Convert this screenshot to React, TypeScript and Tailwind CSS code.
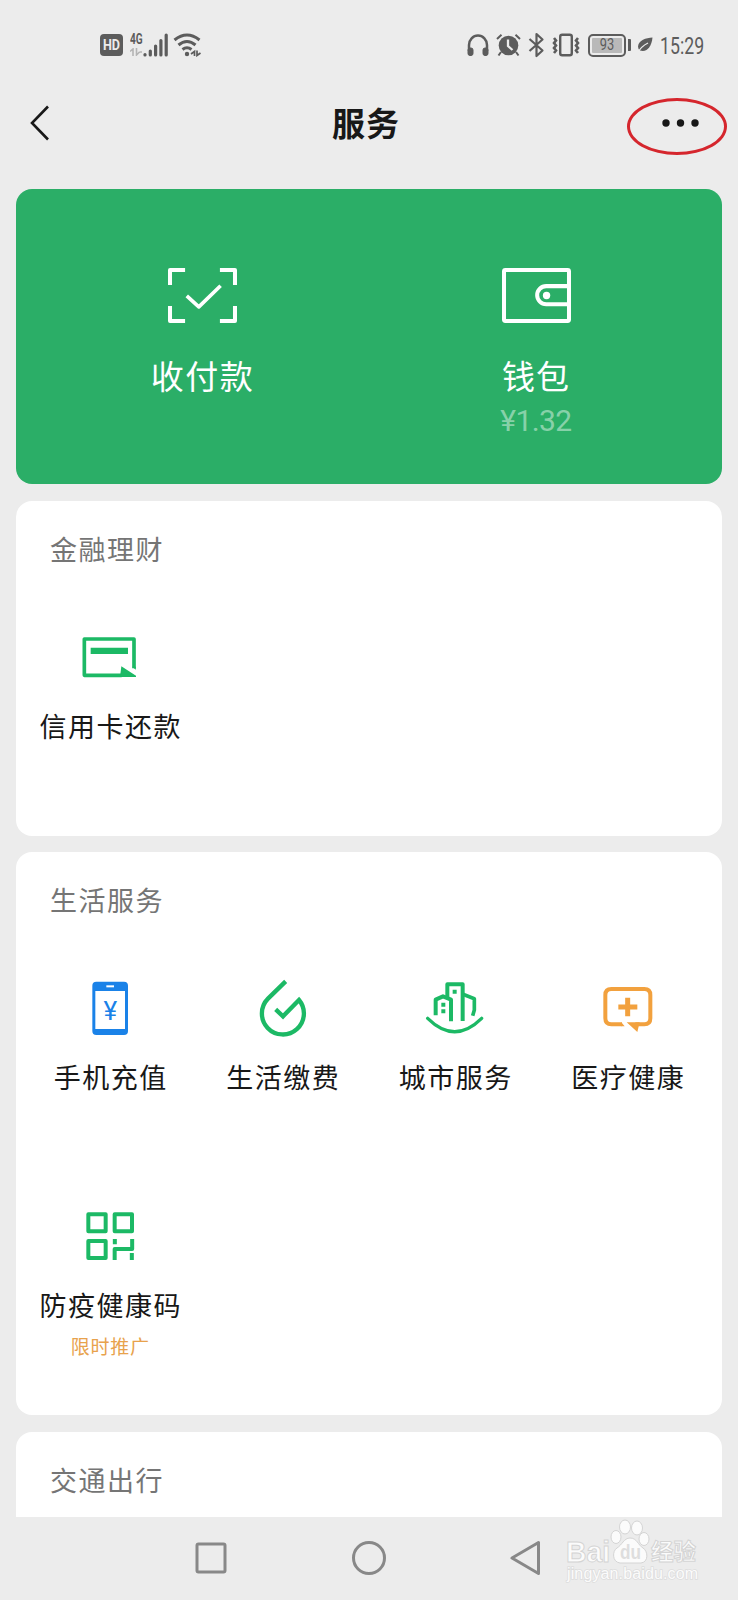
import React from 'react';

interface ServiceItem {
    label: string;
    icon: React.ReactNode;
    note?: string;
}

interface ServiceCardProps {
    title: string;
    items: ServiceItem[];
}

const GREEN = '#1cb965';
const ORANGE = '#f2a13e';

// Service icons, all drawn on the same 180 unit grid
const CardIcon = () => (
    <svg className="size-[60px]" viewBox="0 0 180 180" fill="none">
        <path d="M125 145H13V36H162V124" stroke={GREEN} strokeWidth="11" strokeLinejoin="round" />
        <path d="M32 62H144V81H32Z" fill={GREEN} />
        <path d="M124 118L168 146V150H120Z" fill={GREEN} />
        <path d="M156.500 119L167.500 128V119Z" fill={GREEN} />
    </svg>
);

const PhoneIcon = () => (
    <svg className="size-[60px]" viewBox="0 0 180 180" fill="none">
        <rect x="37" y="11" width="107" height="160" rx="12" fill="#1a82e8" />
        <rect x="46" y="39" width="89" height="114" fill="#fff" />
        <path d="M79 25H102" stroke="#fff" strokeWidth="6" />
        <text x="91" y="126" textAnchor="middle" fontSize="78" fill="#1a82e8" className="font-['Roboto',sans-serif]">¥</text>
    </svg>
);

const DropIcon = () => (
    <svg className="size-[60px]" viewBox="0 0 180 180" fill="none">
        <path d="M98 10L45 62A63 63 0 1 0 138 66L90 115L68 94" stroke={GREEN} strokeWidth="13" />
    </svg>
);

const CityIcon = () => (
    <svg className="size-[60px]" viewBox="0 0 180 180" fill="none" stroke={GREEN}>
        <path d="M32 112V65L54 55L78 65V130" strokeWidth="12" strokeLinejoin="round" />
        <path d="M67 57V19H113V129" strokeWidth="12" strokeLinejoin="round" />
        <path d="M114 49L148 62V96L143 113" strokeWidth="11" strokeLinejoin="round" />
        <path d="M83 41H95M49 80H61M49 100H61" strokeWidth="12" />
        <path d="M8 121Q89 201 170 121" strokeWidth="10" strokeLinecap="round" />
    </svg>
);

const MedicalIcon = () => (
    <svg className="size-[60px]" viewBox="0 0 180 180" fill="none">
        <path
            d="M72 139H40Q22 139 22 121V51Q22 33 40 33H139Q157 33 157 51V121Q157 139 139 139H112"
            stroke={ORANGE}
            strokeWidth="12"
        />
        <path d="M70 133L80 145H70ZM86 133H125L118 162Z" fill={ORANGE} />
        <path d="M61 87H118M89 59V115" stroke={ORANGE} strokeWidth="15" />
    </svg>
);

const CodeIcon = () => (
    <svg className="size-[60px]" viewBox="0 0 180 180" fill="none" stroke={GREEN} strokeWidth="12" strokeLinejoin="round">
        <rect x="25" y="25" width="52" height="51" />
        <rect x="104" y="25" width="52" height="51" />
        <rect x="25" y="105" width="52" height="51" />
        <path d="M156.500 99V129H104V162M104.500 99V115M155.500 141V162" />
    </svg>
);

const FINANCE: ServiceItem[] = [{ label: '信用卡还款', icon: <CardIcon /> }];

const LIFE: ServiceItem[] = [
    { label: '手机充值', icon: <PhoneIcon /> },
    { label: '生活缴费', icon: <DropIcon /> },
    { label: '城市服务', icon: <CityIcon /> },
    { label: '医疗健康', icon: <MedicalIcon /> },
    { label: '防疫健康码', icon: <CodeIcon />, note: '限时推广' }
];

const StatusBar = () => (
    <div className="flex h-[90px] shrink-0 items-center justify-between pr-[35px] pl-[100px] text-[#5c5c5c]">
        <div className="flex items-center">
            <span className="flex h-[22px] w-[23px] items-center justify-center rounded-[4px] bg-current">
                <span className="scale-x-90 text-[14px] leading-none font-bold text-[#ececec]">HD</span>
            </span>
            <span className="ml-[7px] flex h-[24px] w-[13px] flex-col">
                <span className="h-[13px] w-[16px] origin-left scale-x-[0.72] text-[14px] leading-[12px] font-bold">4G</span>
                <svg className="mt-[2px] h-[8px] w-[13px] text-[#b4b4b4]" viewBox="0 0 13 8" fill="none" stroke="currentColor" strokeWidth="1.600">
                    <path d="M0 3.500L3 1V8M6.500 0V7L9.500 4M9.500 4H12" />
                </svg>
            </span>
            <svg className="h-[24px] w-[25px]" viewBox="0 0 25 24" stroke="currentColor" strokeWidth="3.200" strokeLinecap="round">
                <path d="M2 21.500V22M7.300 18V22M12.600 13V22M17.900 7.500V22M23.200 2V22" />
            </svg>
            <svg className="ml-[5px] h-[24px] w-[29px]" viewBox="0 0 29 24" fill="none" stroke="currentColor" strokeWidth="3">
                <path d="M1.500 7Q14 -3 26.500 7M5.500 12Q14 5 22.500 12M9.500 16.500Q14 13 18.500 16.500" />
                <circle cx="14" cy="21" r="2.200" fill="currentColor" stroke="none" />
                <path d="M18 21L21.500 18.500V23M24 17.500V22.500L27.500 20" strokeWidth="1.700" />
            </svg>
        </div>
        <div className="flex items-center">
            <svg className="h-[24px] w-[22px]" viewBox="0 0 22 24" fill="none" stroke="currentColor">
                <path d="M2 18V12A9 9.500 0 0 1 20 12V18" strokeWidth="2.500" />
                <rect x="1" y="15" width="5" height="7.500" rx="2" fill="currentColor" />
                <rect x="16" y="15" width="5" height="7.500" rx="2" fill="currentColor" />
            </svg>
            <svg className="ml-[7px] h-[24px] w-[25px]" viewBox="0 0 25 24" fill="none" stroke="currentColor" strokeWidth="2">
                <circle cx="12.500" cy="12.500" r="9.800" fill="currentColor" stroke="none" />
                <path d="M1 6L5.500 1.800M19.500 1.800L24 6M5 19L2.500 22.500M20 19L22.500 22.500" />
                <path d="M12 6.500V13L16.500 17" stroke="#ececec" strokeWidth="2.300" />
            </svg>
            <svg className="ml-[7px] h-[26px] w-[17px]" viewBox="0 0 17 26" fill="none" stroke="currentColor" strokeWidth="2.200" strokeLinejoin="round">
                <path d="M1.500 7L14.500 18.500L8.500 24V2L14.500 7.500L1.500 19" />
            </svg>
            <svg className="ml-[7px] h-[24px] w-[28px]" viewBox="0 0 28 24" fill="none" stroke="currentColor" strokeWidth="2.400">
                <rect x="8.200" y="1.700" width="11.600" height="20.600" rx="2" />
                <path d="M2 5L4 7.500L2 10L4 12.500L2 15L4 17.500L2 20M26 5L24 7.500L26 10L24 12.500L26 15L24 17.500L26 20" strokeWidth="2.600" />
            </svg>
            <span className="ml-[8px] flex h-[23px] w-[38px] items-center rounded-[5px] border-2 border-current p-[2px]">
                <span className="flex h-full w-full items-center justify-center rounded-[1px] bg-[#b9b9b9]">
                    <span className="scale-x-[0.8] text-[16px] leading-none">93</span>
                </span>
            </span>
            <span className="ml-[2px] h-[12px] w-[3px] rounded-r-[1px] bg-current" />
            <svg className="ml-[6px] h-[16px] w-[16px]" viewBox="0 0 16 16" fill="none">
                <path d="M15.500 .5C9 1 1.500 3 1 9.500Q1 12 3 13.500C10 15.500 14.500 10 15.500 .5Z" fill="currentColor" />
                <path d="M1 15.500Q4 9.500 11 6" stroke="#ececec" strokeWidth="1.300" />
            </svg>
            <span className="ml-[7px] w-[43px] pt-[2px] text-[23px] leading-none">
                <span className="block origin-left scale-x-[0.77]">15:29</span>
            </span>
        </div>
    </div>
);

const TitleBar = () => (
    <header className="relative flex h-[67px] shrink-0 items-center justify-between pr-[39px] pb-[1px] pl-[30px] text-[#181818]">
        <svg className="h-[36px] w-[20px]" viewBox="0 0 20 36" fill="none" stroke="currentColor" strokeWidth="2.600">
            <path d="M18 1.500L2 18L18 34.500" />
        </svg>
        <h1 className="absolute inset-x-0 pt-[2px] pr-[6px] text-center text-[33px] leading-none font-bold tracking-[1px]">服务</h1>
        <svg className="h-[8px] w-[37px]" viewBox="0 0 37 8" fill="currentColor">
            <circle cx="4" cy="4" r="3.700" />
            <circle cx="18.500" cy="4" r="3.700" />
            <circle cx="33" cy="4" r="3.700" />
        </svg>
        <span className="absolute top-[8px] right-[11px] h-[57px] w-[100px] rounded-[50%] border-[3px] border-[#d5262d]" />
    </header>
);

const PayPanel = () => (
    <section className="mt-[32px] grid h-[295px] shrink-0 grid-cols-2 rounded-[16px] bg-[#2bae67] px-5 pt-[79px] text-white">
        <div className="flex flex-col items-center">
            <svg className="h-[55px] w-[69px]" viewBox="0 0 206 164" fill="none" stroke="currentColor" strokeWidth="12" strokeLinejoin="round">
                <path d="M6 51V6H51M155 6H200V51M200 113V158H155M51 158H6V113" />
                <path d="M56 83L92 116L157 53" strokeWidth="11" />
            </svg>
            <span className="mt-[33px] text-[33px] leading-[44px] tracking-[1.5px]">收付款</span>
        </div>
        <div className="flex flex-col items-center pl-[1px]">
            <svg className="h-[55px] w-[69px]" viewBox="0 0 206 164" fill="none" stroke="currentColor" strokeWidth="12">
                <rect x="6" y="6" width="194" height="152" rx="4" />
                <path d="M199 54H132A27 27 0 0 0 132 108H199" />
                <circle cx="133" cy="82" r="11" fill="currentColor" stroke="none" />
            </svg>
            <span className="mt-[33px] text-[33px] leading-[44px] tracking-[1px]">钱包</span>
            <span className="mt-[4px] text-[30px] leading-[34px] tracking-[-0.6px] text-white/45">¥1.32</span>
        </div>
    </section>
);

const ServiceCard: React.FC<ServiceCardProps> = ({ title, items }) => (
    <section className="shrink-0 rounded-[16px] bg-white px-2 pb-[7px]">
        <h2 className="flex h-[100px] items-center pt-[1px] pl-[26px] text-[27px] leading-none tracking-[1.5px] text-[#757575]">{title}</h2>
        <div className="grid grid-cols-4">
            {items.map((item) => (
                <div key={item.label} className="flex h-[228px] flex-col items-center pt-[26px]">
                    {item.icon}
                    <span className="mt-[23px] pl-[1px] text-[27px] leading-[36px] tracking-[1.5px] whitespace-nowrap text-[#181818]">{item.label}</span>
                    {item.note && <span className="mt-[11px] text-[19px] leading-[24px] tracking-[0.8px] text-[#e8a24c]">{item.note}</span>}
                </div>
            ))}
        </div>
    </section>
);

const NavBar = () => (
    <nav className="relative h-[83px] shrink-0 bg-[#ececec] pl-[195px] text-[#888888]">
        <div className="flex h-full items-center pb-[1px]">
            <svg className="size-[32px]" viewBox="0 0 32 32" fill="none" stroke="currentColor" strokeWidth="3">
                <rect x="2" y="2" width="28" height="28" rx="1.500" />
            </svg>
            <svg className="ml-[124px] size-[36px]" viewBox="0 0 36 36" fill="none" stroke="currentColor" strokeWidth="3">
                <circle cx="18" cy="18" r="15.500" />
            </svg>
            <svg className="ml-[123px] h-[36px] w-[31px]" viewBox="0 0 31 36" fill="none" stroke="currentColor" strokeWidth="3" strokeLinejoin="round">
                <path d="M28.500 2.500V33.500L2 18Z" />
            </svg>
        </div>
        <Watermark />
    </nav>
);

const Watermark = () => (
    <svg
        className="absolute top-0 left-[560px] h-[83px] w-[145px] font-['Liberation_Sans','Noto_Sans_CJK_SC',sans-serif]"
        viewBox="0 0 145 83"
        fill="#fbfbfb"
        stroke="#d4d4d4"
        strokeWidth="1"
    >
        <text x="6" y="45" fontSize="30" fontWeight="700" textLength="44" lengthAdjust="spacingAndGlyphs">Bai</text>
        <ellipse cx="56" cy="20" rx="5" ry="6.500" />
        <ellipse cx="65" cy="10" rx="5.500" ry="7" />
        <ellipse cx="77" cy="11" rx="5.500" ry="7" />
        <ellipse cx="84" cy="22" rx="5" ry="6.500" />
        <path d="M70 21C64 21 62 28 57 31C52 34 52 45 60 46H81C89 45 88 34 83 31C78 28 77 21 70 21Z" />
        <text x="60" y="42" fontSize="20" fontWeight="700" textLength="21" lengthAdjust="spacingAndGlyphs" fill="#dedede" stroke="none">du</text>
        <text x="91" y="43" fontSize="23" fontWeight="700" textLength="45" lengthAdjust="spacingAndGlyphs">经验</text>
        <text x="7" y="62" fontSize="16" textLength="131" stroke="#dcdcdc" strokeWidth="1.500" paintOrder="stroke">jingyan.baidu.com</text>
    </svg>
);

export default function App() {
    return (
        <div className="flex h-[1600px] w-full flex-col overflow-hidden bg-[#ececec] font-['Roboto','Noto_Sans_CJK_SC',sans-serif]">
            <StatusBar />
            <TitleBar />
            <main className="flex h-[1360px] flex-col overflow-hidden px-4">
                <PayPanel />
                <div className="mt-[17px] flex flex-col gap-4">
                    <ServiceCard title="金融理财" items={FINANCE} />
                    <ServiceCard title="生活服务" items={LIFE} />
                    <section className="mt-[1px] h-[200px] rounded-[16px] bg-white px-2">
                        <h2 className="flex h-[100px] items-center pt-[1px] pl-[26px] text-[27px] leading-none tracking-[1.5px] text-[#757575]">交通出行</h2>
                    </section>
                </div>
            </main>
            <NavBar />
        </div>
    );
}
